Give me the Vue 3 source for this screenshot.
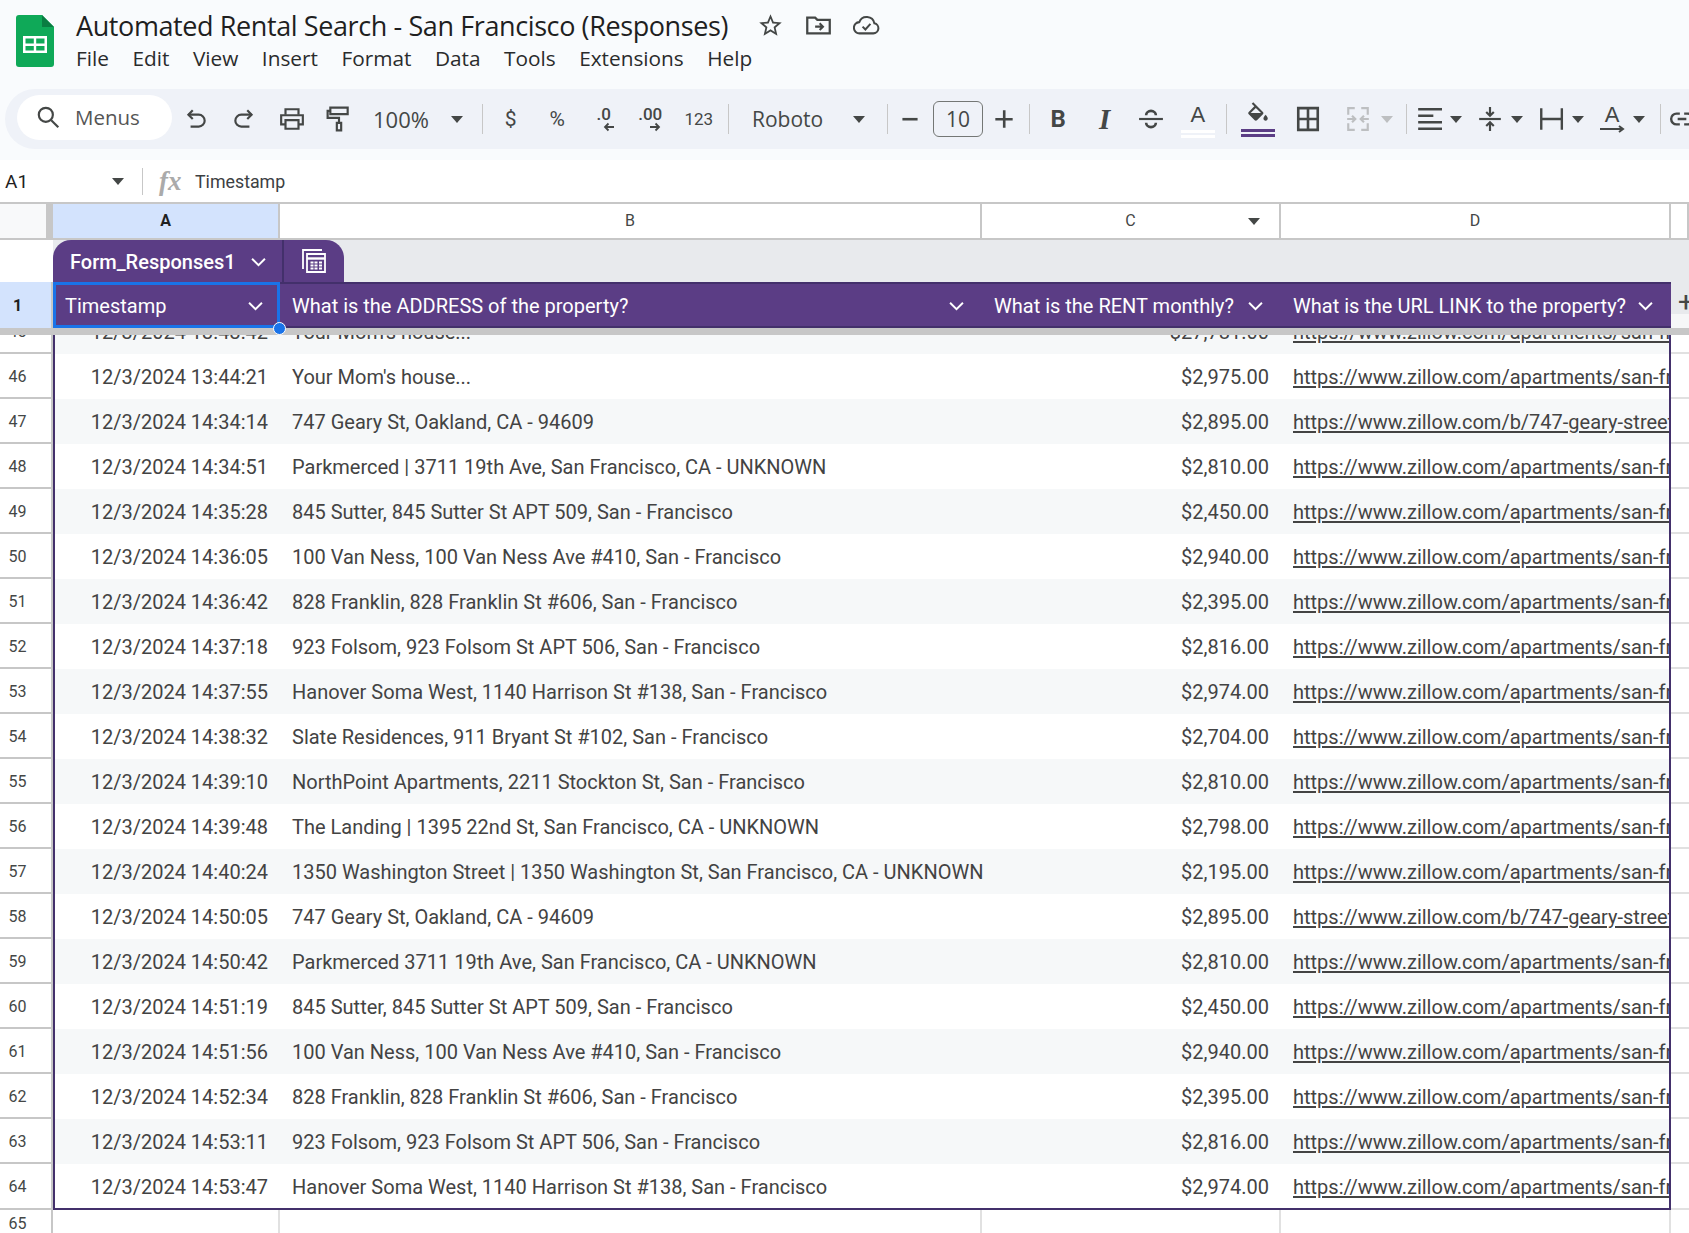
<template>
  <div class="page">
    <header class="top">
      <svg class="logo" viewBox="0 0 38 52">
        <path d="M3 0H26L38 12V49a3 3 0 0 1-3 3H3a3 3 0 0 1-3-3V3a3 3 0 0 1 3-3z" fill="#0fa958" />
        <path d="M26 0L38 12H26z" fill="#0a7d42" />
        <path d="M7 21H31V38H7zM9.500 23.500V28.500H17.800V23.500zM20.200 23.500V28.500H28.500V23.500zM9.500 31V35.500H17.800V31zM20.200 31V35.500H28.500V31z" fill="#fff" fill-rule="evenodd" />
      </svg>
      <div class="head-text">
        <div class="title-row">
          <span class="doc-title">Automated Rental Search - San Francisco (Responses)</span>
          <svg class="ic title-ic star" viewBox="0 0 24 24"><path d="M22 9.240l-7.190-.62L12 2 9.190 8.630 2 9.240l5.460 4.730L5.820 21 12 17.270 18.180 21l-1.630-7.030L22 9.240zM12 15.400l-3.760 2.270 1-4.280-3.320-2.880 4.380-.38L12 6.100l1.710 4.040 4.380.38-3.320 2.880 1 4.280L12 15.400z" fill="#444746" /></svg>
          <svg class="ic title-ic" viewBox="0 0 24 24" fill="none" stroke="#444746" stroke-width="2"><path d="M2 19V5h7l2 2h11v12z" /><path d="M9 13h7M13 10l3 3-3 3" stroke-width="1.800" /></svg>
          <svg class="ic title-ic" viewBox="0 0 24 24" fill="none" stroke="#444746" stroke-width="1.800"><path d="M6 19h12a4.500 4.500 0 0 0 1-8.900A7 7 0 0 0 5.600 9 5 5 0 0 0 6 19z" /><path d="M8.500 13l2.500 2.500 4.500-5" /></svg>
        </div>
        <nav class="menu">
          <span v-for="item in menuItems" :key="item">{{ item }}</span>
        </nav>
      </div>
    </header>

    <div class="toolbar-wrap">
      <div class="toolbar">
        <div class="search">
          <svg class="ic" viewBox="0 0 24 24" fill="none" stroke="#444746" stroke-width="2"><circle cx="10" cy="10" r="6.500" /><path d="M15 15l6.500 6.500" /></svg>
          <span>Menus</span>
        </div>
        <span class="btn w48"><svg class="ic" viewBox="0 0 24 24" fill="none" stroke="#444746" stroke-width="2"><path d="M9 4L5 8l4 4" /><path d="M5 8h9.500a5 5 0 0 1 0 11H7" /></svg></span>
        <span class="btn w48"><svg class="ic" viewBox="0 0 24 24" fill="none" stroke="#444746" stroke-width="2"><path d="M15 4l4 4-4 4" /><path d="M19 8H9.500a5 5 0 0 0 0 11H17" /></svg></span>
        <span class="btn w47"><svg class="ic" viewBox="0 0 24 24" fill="none" stroke="#444746" stroke-width="2"><path d="M6 8V3h12v5" /><path d="M6 17H2V8.500h20V17h-4" /><path d="M6 13h12v8H6z" /></svg></span>
        <span class="btn w47"><svg class="ic" viewBox="0 0 24 24" fill="none" stroke="#444746" stroke-width="2"><path d="M4 1.500h16v6H4z" /><path d="M4 4.500H1.500V11H12v5" /><path d="M10 15.500h4v7h-4z" /></svg></span>
        <span class="zoom-box"><span>100%</span><i class="caret" /></span>
        <i class="sep" />
        <span class="btn txt m2">$</span>
        <span class="btn txt">%</span>
        <span class="btn dec">
          <span>.0</span>
          <svg class="mini" viewBox="0 0 12 10" fill="none" stroke="#444746" stroke-width="1.800"><path d="M11 5H2M5.500 1.500L2 5l3.500 3.500" /></svg>
        </span>
        <span class="btn dec">
          <span>.00</span>
          <svg class="mini" viewBox="0 0 12 10" fill="none" stroke="#444746" stroke-width="1.800"><path d="M1 5h9M6.500 1.500L10 5 6.500 8.500" /></svg>
        </span>
        <span class="btn txt num-fmt">123</span>
        <i class="sep" />
        <span class="font-box"><span>Roboto</span><i class="caret" /></span>
        <i class="sep m1" />
        <span class="btn w45"><svg class="ic" viewBox="0 0 24 24"><path d="M5 11h14v2.400H5z" fill="#444746" /></svg></span>
        <span class="size-box">10</span>
        <span class="btn w42"><svg class="ic" viewBox="0 0 24 24"><path d="M11 4h2.400v7H20v2.400h-6.600V20H11v-6.600H4V11h7z" fill="#444746" /></svg></span>
        <i class="sep m4" />
        <span class="btn fmt-b">B</span>
        <span class="btn fmt-i">I</span>
        <span class="btn"><svg class="ic" viewBox="0 0 24 24" fill="none" stroke="#444746" stroke-width="2"><path d="M1 12h22" /><path d="M7.500 8.500a4.500 4 0 0 1 9 0M7.500 15.500a4.500 4 0 0 0 9 0" stroke-width="2.400" /></svg></span>
        <span class="btn text-color">
          <span>A</span>
          <i class="dbl white" />
        </span>
        <i class="sep m5" />
        <span class="btn w52 fill-btn">
          <svg class="ic" viewBox="0 0 24 22"><path d="M16.560 10.940L7.620 2 6.210 3.410l2.380 2.380-5.150 5.150c-.59.59-.59 1.540 0 2.120l5.500 5.500c.29.29.68.44 1.060.44s.77-.15 1.060-.44l5.500-5.500c.59-.58.59-1.530 0-2.120z" fill="#444746" /><path d="M5.210 12L10 7.210 14.790 12z" fill="#eff2f8" /><path d="M19 13.500s-2 2.170-2 3.500c0 1.100.9 2 2 2s2-.9 2-2c0-1.330-2-3.500-2-3.500z" fill="#444746" /></svg>
          <i class="dbl purple" />
        </span>
        <span class="btn w47"><svg class="ic" viewBox="0 0 24 24" fill="none" stroke="#444746" stroke-width="2.400"><path d="M3 2h18v20H3zM12 2v20M3 12h18" /></svg></span>
        <span class="group merge">
          <svg class="ic" viewBox="0 0 24 24" fill="none" stroke="#bdbfc1" stroke-width="2"><path d="M3 8V2h6M15 2h6v6M3 16v6h6M15 22h6v-6" /><path d="M2 12h7M6.500 9L9.500 12l-3 3M22 12h-7M17.500 9l-3 3 3 3" /></svg>
          <i class="caret off" />
        </span>
        <i class="sep m5" />
        <span class="group first">
          <svg class="ic" viewBox="0 0 24 24" fill="none" stroke="#444746" stroke-width="2.200"><path d="M2 3h22M2 9h14M2 15h22M2 21h22" /></svg>
          <i class="caret" />
        </span>
        <span class="group">
          <svg class="ic" viewBox="0 0 24 24" fill="none" stroke="#444746" stroke-width="2"><path d="M2 12h20" /><path d="M12 1v7M8.500 5.500L12 9l3.500-3.500M12 23v-7M8.500 18.500L12 15l3.500 3.500" /></svg>
          <i class="caret" />
        </span>
        <span class="group">
          <svg class="ic" viewBox="0 0 24 24" fill="none" stroke="#444746" stroke-width="2.200"><path d="M3 2v20M22 2v20M3 12h19" /></svg>
          <i class="caret" />
        </span>
        <span class="group">
          <span class="rotate-a">
            <span>A</span>
            <svg viewBox="0 0 26 8" fill="none" stroke="#444746" stroke-width="2"><path d="M1 4h23M20 1l4 3-4 3" /></svg>
          </span>
          <i class="caret" />
        </span>
        <i class="sep m15" />
        <svg class="ic link-ic" viewBox="0 0 24 24" fill="none" stroke="#444746" stroke-width="2.200"><path d="M10 7H7a5 5 0 0 0 0 10h3M8 12h8M14 7h3a5 5 0 0 1 0 10h-3" /></svg>
      </div>
    </div>

    <div class="formula">
      <span class="cell-ref">A1</span>
      <i class="caret dark" />
      <i class="sep tall" />
      <span class="fx">fx</span>
      <span class="formula-text">Timestamp</span>
    </div>

    <div class="sheet">
      <!-- column letters -->
      <div class="grid col-head">
        <div class="corner" />
        <div class="col active">A</div>
        <div class="col">B</div>
        <div class="col has-filter">C<i class="caret dark" /></div>
        <div class="col">D</div>
        <div class="col" />
      </div>

      <!-- table name tabs -->
      <div class="tab-row">
        <div class="tab-gutter" />
        <div class="tabs">
          <div class="tab-name">
            <span>Form_Responses1</span>
            <svg class="chev" viewBox="0 0 14 9"><path d="M1 1.500l6 6 6-6" /></svg>
          </div>
          <div class="tab-calc">
            <svg viewBox="0 0 26 26" fill="none" stroke="#fff" stroke-width="1.800"><path d="M2 21V2h19" /><path d="M6 6h18v18H6z" /><path d="M6 10.500h18" stroke-width="2.400" /><path d="M9.500 14.500h3M13.500 14.500h3M18 14.500h3M9.500 17.500h3M13.500 17.500h3M18 17.500h3M9.500 20.500h3M13.500 20.500h3M18 20.500h3" stroke-width="2" /></svg>
          </div>
        </div>
      </div>

      <!-- frozen header row -->
      <div class="grid head-row">
        <div class="num head-num">1</div>
        <div class="hcell selected">
          <span>Timestamp</span>
          <svg class="chev" viewBox="0 0 14 9"><path d="M1 1.500l6 6 6-6" /></svg>
        </div>
        <div class="hcell">
          <span>What is the ADDRESS of the property?</span>
          <svg class="chev" viewBox="0 0 14 9"><path d="M1 1.500l6 6 6-6" /></svg>
        </div>
        <div class="hcell">
          <span>What is the RENT monthly?</span>
          <svg class="chev" viewBox="0 0 14 9"><path d="M1 1.500l6 6 6-6" /></svg>
        </div>
        <div class="hcell">
          <span>What is the URL LINK to the property?</span>
          <svg class="chev" viewBox="0 0 14 9"><path d="M1 1.500l6 6 6-6" /></svg>
        </div>
        <div class="add-col"><span>+</span></div>
        <i class="fill-handle" />
      </div>
      <div class="freeze-bar" />

      <!-- data rows -->
      <div
        v-for="(row, i) in rows"
        :key="row.n"
        class="grid data-row"
        :class="{ tinted: i % 2 === 0, clipped: i === 0, last: i === rows.length - 1 }"
      >
        <div class="num">{{ row.n }}</div>
        <div class="cell ts">{{ row.time }}</div>
        <div class="cell addr">{{ row.address }}</div>
        <div class="cell rent">{{ row.rent }}</div>
        <div class="cell url"><a>{{ row.url }}</a></div>
        <div class="cell gap" />
      </div>

      <div class="grid empty-row">
        <div class="num">65</div>
        <div class="empty" />
        <div class="empty" />
        <div class="empty" />
        <div class="empty" />
        <div />
      </div>
    </div>
  </div>
</template>

<script setup>
const menuItems = ['File', 'Edit', 'View', 'Insert', 'Format', 'Data', 'Tools', 'Extensions', 'Help']

const aptUrl = 'https://www.zillow.com/apartments/san-francisco-ca/units/'
const gearyUrl = 'https://www.zillow.com/b/747-geary-street-oakland-ca/'

const rows = [
  { n: 45, time: '12/3/2024 13:43:42', address: "Your Mom's house...", rent: '$27,781.00', url: aptUrl },
  { n: 46, time: '12/3/2024 13:44:21', address: "Your Mom's house...", rent: '$2,975.00', url: aptUrl },
  { n: 47, time: '12/3/2024 14:34:14', address: '747 Geary St, Oakland, CA - 94609', rent: '$2,895.00', url: gearyUrl },
  { n: 48, time: '12/3/2024 14:34:51', address: 'Parkmerced | 3711 19th Ave, San Francisco, CA - UNKNOWN', rent: '$2,810.00', url: aptUrl },
  { n: 49, time: '12/3/2024 14:35:28', address: '845 Sutter, 845 Sutter St APT 509, San - Francisco', rent: '$2,450.00', url: aptUrl },
  { n: 50, time: '12/3/2024 14:36:05', address: '100 Van Ness, 100 Van Ness Ave #410, San - Francisco', rent: '$2,940.00', url: aptUrl },
  { n: 51, time: '12/3/2024 14:36:42', address: '828 Franklin, 828 Franklin St #606, San - Francisco', rent: '$2,395.00', url: aptUrl },
  { n: 52, time: '12/3/2024 14:37:18', address: '923 Folsom, 923 Folsom St APT 506, San - Francisco', rent: '$2,816.00', url: aptUrl },
  { n: 53, time: '12/3/2024 14:37:55', address: 'Hanover Soma West, 1140 Harrison St #138, San - Francisco', rent: '$2,974.00', url: aptUrl },
  { n: 54, time: '12/3/2024 14:38:32', address: 'Slate Residences, 911 Bryant St #102, San - Francisco', rent: '$2,704.00', url: aptUrl },
  { n: 55, time: '12/3/2024 14:39:10', address: 'NorthPoint Apartments, 2211 Stockton St, San - Francisco', rent: '$2,810.00', url: aptUrl },
  { n: 56, time: '12/3/2024 14:39:48', address: 'The Landing | 1395 22nd St, San Francisco, CA - UNKNOWN', rent: '$2,798.00', url: aptUrl },
  { n: 57, time: '12/3/2024 14:40:24', address: '1350 Washington Street | 1350 Washington St, San Francisco, CA - UNKNOWN', rent: '$2,195.00', url: aptUrl },
  { n: 58, time: '12/3/2024 14:50:05', address: '747 Geary St, Oakland, CA - 94609', rent: '$2,895.00', url: gearyUrl },
  { n: 59, time: '12/3/2024 14:50:42', address: 'Parkmerced 3711 19th Ave, San Francisco, CA - UNKNOWN', rent: '$2,810.00', url: aptUrl },
  { n: 60, time: '12/3/2024 14:51:19', address: '845 Sutter, 845 Sutter St APT 509, San - Francisco', rent: '$2,450.00', url: aptUrl },
  { n: 61, time: '12/3/2024 14:51:56', address: '100 Van Ness, 100 Van Ness Ave #410, San - Francisco', rent: '$2,940.00', url: aptUrl },
  { n: 62, time: '12/3/2024 14:52:34', address: '828 Franklin, 828 Franklin St #606, San - Francisco', rent: '$2,395.00', url: aptUrl },
  { n: 63, time: '12/3/2024 14:53:11', address: '923 Folsom, 923 Folsom St APT 506, San - Francisco', rent: '$2,816.00', url: aptUrl },
  { n: 64, time: '12/3/2024 14:53:47', address: 'Hanover Soma West, 1140 Harrison St #138, San - Francisco', rent: '$2,974.00', url: aptUrl }
]
</script>

<style>
html, body { background: #fff; overflow: hidden; }
</style>

<style scoped>
.page {
  width: 1689px;
  height: 1233px;
  overflow: hidden;
  font-family: Roboto, "Liberation Sans", sans-serif;
  color: #444746;
  background: #fff;
}
.ic { width: 26px; height: 26px; flex: none; display: block; }

/* title + menu */
.top {
  height: 89px;
  box-sizing: border-box;
  background: #f9fbfd;
  display: flex;
  padding: 15px 0 0 16px;
}
.logo { width: 38px; height: 52px; flex: none; }
.head-text { margin-left: 22px; margin-top: -6px; }
.title-row { display: flex; align-items: center; height: 32px; }
.doc-title { font-size: 27px; color: #1f1f1f; font-family: "Open Sans", Roboto, sans-serif; letter-spacing: -0.4px; }
.title-ic { width: 27px; height: 27px; margin-left: 21px; }
.title-ic.star { margin-left: 29px; }
.menu { display: flex; gap: 23.500px; margin-top: 3px; font-size: 20.800px; color: #2a2b2c; font-family: "Open Sans", Roboto, sans-serif; }

/* toolbar */
.toolbar-wrap { background: #f9fbfd; height: 71px; box-sizing: border-box; padding: 0 0 11px 5px; }
.toolbar {
  height: 60px;
  width: 1800px;
  background: #eff2f8;
  border-radius: 30px;
  display: flex;
  align-items: center;
  padding-left: 12px;
  box-sizing: border-box;
  white-space: nowrap;
  font-family: "Open Sans", Roboto, sans-serif;
}
.search {
  width: 155px;
  height: 45px;
  flex: none;
  background: #fff;
  border-radius: 23px;
  display: flex;
  align-items: center;
  box-sizing: border-box;
  padding-left: 18px;
  font-size: 20.500px;
  color: #555;
  gap: 14px;
  margin-top: -4px;
}
.btn { width: 46.500px; height: 45px; flex: none; display: flex; align-items: center; justify-content: center; position: relative; }
.w45 { width: 45.500px; }
.w47 { width: 47px; }
.w48 { width: 48px; }
.w42 { width: 42px; }
.w52 { width: 52px; }
.m2 { margin-left: 2px; }
.txt { font-size: 21px; font-family: Roboto, sans-serif; color: #444746; }
.num-fmt { font-size: 17px; margin-left: 2px; }
.dec { flex-direction: column; font-size: 17px; font-family: Roboto, sans-serif; font-weight: 500; line-height: 16px; }
.dec .mini { width: 12px; height: 10px; margin-left: 10px; }
.zoom-box { width: 113.500px; flex: none; display: flex; align-items: center; padding-left: 11px; box-sizing: border-box; font-size: 22px; color: #444746; }
.zoom-box .caret { margin-left: 22px; }
.font-box { width: 148.500px; flex: none; display: flex; align-items: center; padding-left: 20px; box-sizing: border-box; font-size: 21px; }
.font-box .caret { margin-left: 30px; }
.caret {
  width: 0;
  height: 0;
  flex: none;
  display: block;
  border-left: 6px solid transparent;
  border-right: 6px solid transparent;
  border-top: 7px solid #444746;
}
.caret.off { border-top-color: #bdbfc1; }
.caret.dark { border-top-color: #444746; }
.sep { width: 1px; height: 30px; background: #c7c7c7; flex: none; display: block; margin: 0 3px 0 6px; }
.sep.m1 { margin: 0 0 0 6px; }
.sep.m4 { margin: 0 5px 0 4px; }
.sep.m5 { margin: 0 5px 0 5px; }
.sep.m15 { margin: 0 0 0 15px; }
.size-box {
  width: 50px;
  height: 36px;
  flex: none;
  box-sizing: border-box;
  border: 1.500px solid #747775;
  border-radius: 6px;
  display: flex;
  align-items: center;
  justify-content: center;
  font-size: 21px;
}
.fmt-b { font-family: Roboto, sans-serif; font-weight: 700; font-size: 24px; }
.fmt-i { font-family: "Liberation Serif", serif; font-style: italic; font-weight: 700; font-size: 29px; }
.text-color span { font-family: "Liberation Sans", sans-serif; font-size: 22px; margin-top: -8px; }
.dbl { position: absolute; left: 50%; margin-left: -17px; width: 34px; display: block; box-sizing: border-box; background: #eff2f8; }
.dbl.white { top: 33px; height: 8px; border-top: 3px solid #fff; border-bottom: 3px solid #fff; }
.dbl.purple { top: 32px; height: 8px; border-top: 3px solid #5b3d85; border-bottom: 3px solid #5b3d85; }
.fill-btn .ic { margin-top: -14px; }
.group { display: flex; align-items: center; gap: 9px; margin-left: 15px; flex: none; }
.group .caret { margin-left: -1px; }
.group.first { margin-left: 4px; }
.group.merge { margin-left: 14px; gap: 11px; width: 56px; }
.rotate-a { width: 26px; display: flex; flex-direction: column; align-items: center; }
.rotate-a span { font-family: "Liberation Sans", sans-serif; font-size: 22px; line-height: 20px; }
.rotate-a svg { width: 26px; height: 8px; display: block; }
.link-ic { margin-left: 8px; }

/* formula bar */
.formula { height: 42px; display: flex; align-items: center; background: #fff; color: #1f1f1f; }
.cell-ref { font-size: 19px; margin-left: 5px; width: 107px; }
.formula .sep.tall { height: 27px; margin: 0 0 0 18px; }
.fx { font-family: "Liberation Serif", serif; font-style: italic; font-weight: 700; font-size: 27px; color: #aaa; margin-left: 16px; width: 36px; line-height: 27px; }
.formula-text { font-size: 17.800px; color: #3c4043; }

/* sheet */
.grid { display: grid; grid-template-columns: 53px 227px 702px 299px 390px 18px; }
.col-head { height: 36px; border-top: 2px solid #c7c7c7; box-sizing: border-box; background: #fff; }
.corner { background: #f8f9fa; border-right: 7px solid #c7c7c7; }
.col {
  display: flex;
  align-items: center;
  justify-content: center;
  font-size: 16px;
  color: #444746;
  border-right: 2px solid #c7c7c7;
  position: relative;
  padding-bottom: 2px;
  box-sizing: border-box;
}
.col.active { background: #d3e3fd; font-weight: 700; color: #1f1f1f; }
.has-filter .caret { position: absolute; right: 19px; top: 14px; }

.tab-row { height: 44px; display: flex; border-top: 2px solid #c7c7c7; box-sizing: border-box; background: #e8eaed; }
.tab-gutter { width: 53px; background: #fff; }
.tabs { display: flex; background: #5b3d85; border-radius: 18px 18px 0 0; color: #fff; align-self: stretch; }
.tab-name {
  width: 231px;
  box-sizing: border-box;
  padding: 2px 0 0 17px;
  display: flex;
  align-items: center;
  font-size: 20px;
  font-weight: 500;
  border-right: 2px solid #43306b;
}
.tab-name .chev { margin-left: 15px; }
.tab-calc { width: 60px; display: flex; align-items: center; justify-content: center; }
.tab-calc svg { width: 26px; height: 26px; }
.chev { width: 15px; height: 10px; flex: none; fill: none; stroke: #fff; stroke-width: 1.800; }

.head-row { height: 46px; position: relative; }
.num {
  box-sizing: border-box;
  border-right: 2px solid #c7c7c7;
  border-bottom: 2px solid #c7c7c7;
  font-size: 16px;
  color: #444746;
  display: flex;
  align-items: center;
  justify-content: center;
  padding: 1px 16px 0 0;
  background: #fff;
}
.head-num { background: #d3e3fd; font-weight: 700; color: #1f1f1f; border-bottom: 0; }
.hcell {
  background: #5b3d85;
  color: #fff;
  font-size: 20px;
  border-top: 2px solid #43306b;
  border-bottom: 2px solid #43306b;
  box-sizing: border-box;
  display: flex;
  align-items: center;
  justify-content: space-between;
  padding: 2px 18px 0 12px;
  min-width: 0;
}
.hcell.selected { border: 3px solid #1a73e8; padding: 1px 14px 0 9px; }
.add-col {
  background: linear-gradient(#e8eaed 32px, #f6f7f8 32px);
  position: relative;
  overflow: hidden;
  font-size: 28px;
  color: #444746;
}
.add-col span { position: absolute; left: 7px; top: 3px; }
.fill-handle {
  position: absolute;
  left: 273px;
  top: 40px;
  width: 13px;
  height: 13px;
  box-sizing: border-box;
  border-radius: 50%;
  background: #1a73e8;
  border: 1.500px solid #fff;
  z-index: 2;
}
.freeze-bar { height: 7px; background: #c7c7c7; }

.data-row { height: 45px; background: #fff; grid-template-rows: 45px; }
.data-row.tinted { background: #f6f8f9; }
.data-row .num { background: #fff; }
.data-row.clipped { height: 19px; grid-template-rows: 19px; overflow: hidden; align-items: end; }
.data-row.clipped > * { height: 45px; }
.cell {
  font-size: 20px;
  color: #434343;
  line-height: 46px;
  white-space: nowrap;
  overflow: hidden;
  box-sizing: border-box;
}
.ts { text-align: right; padding-right: 12px; border-left: 2px solid #43306b; }
.addr { padding-left: 12px; overflow: visible; }
.rent { text-align: right; padding-right: 12px; }
.url { padding-left: 12px; border-right: 2px solid #43306b; }
.url a { color: #434343; text-decoration: underline; text-underline-offset: 2px; text-decoration-thickness: 2px; }
.gap { background: #fff; border-bottom: 2px solid #e1e1e1; }
.data-row.last { height: 46px; grid-template-rows: 46px; }
.data-row.last .cell:not(.gap) { border-bottom: 2px solid #43306b; }
.empty-row { height: 60px; }
.empty-row .num { align-items: flex-start; padding-top: 4px; border-bottom: 0; }
.empty { border-right: 2px solid #e1e1e1; }
</style>
